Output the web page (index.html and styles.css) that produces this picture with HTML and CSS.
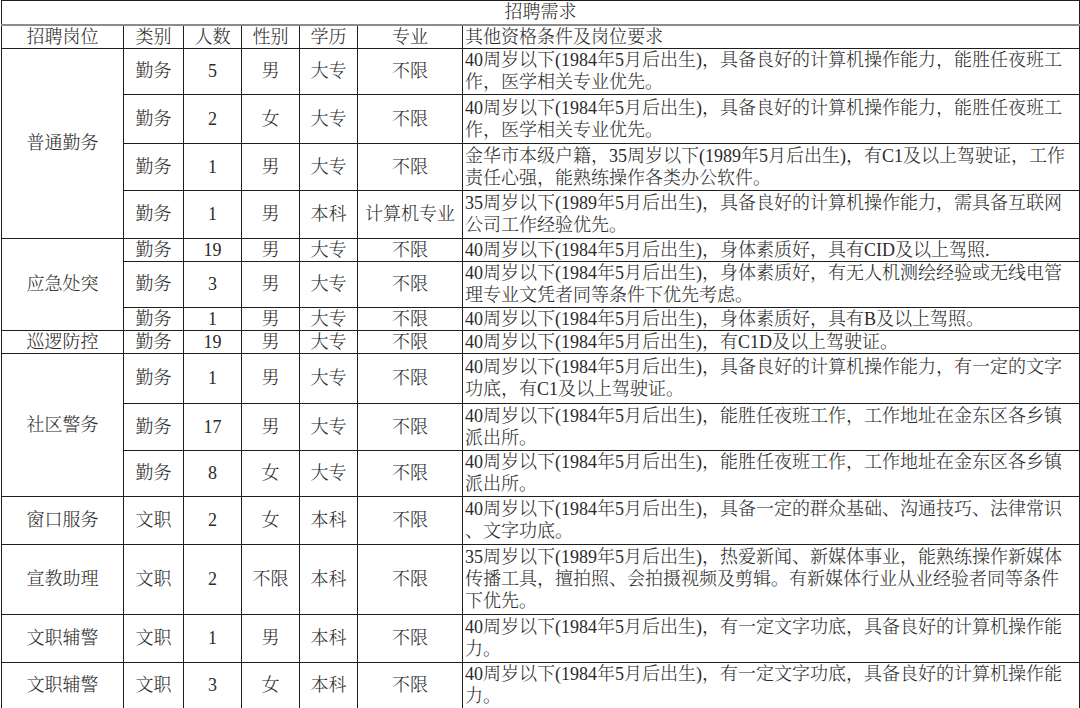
FILE: index.html
```html
<!DOCTYPE html>
<html lang="zh-CN">
<head>
<meta charset="utf-8">
<title>招聘需求</title>
<link rel="stylesheet" href="styles.css">
</head>
<body>
<table class="jobs">
  <colgroup>
    <col class="c-post"><col class="c-type"><col class="c-num"><col class="c-sex"><col class="c-edu"><col class="c-major"><col class="c-req">
  </colgroup>
  <tr class="h24 title-row"><td colspan="7" class="title">招聘需求</td></tr>
  <tr class="h23"><td>招聘岗位</td><td>类别</td><td>人数</td><td>性别</td><td>学历</td><td>专业</td><td class="req">其他资格条件及岗位要求</td></tr>

  <tr class="h46"><td rowspan="4">普通勤务</td><td>勤务</td><td>5</td><td>男</td><td>大专</td><td>不限</td><td class="req">40周岁以下(1984年5月后出生)，具备良好的计算机操作能力，能胜任夜班工<br>作，医学相关专业优先。</td></tr>
  <tr class="h49"><td>勤务</td><td>2</td><td>女</td><td>大专</td><td>不限</td><td class="req">40周岁以下(1984年5月后出生)，具备良好的计算机操作能力，能胜任夜班工<br>作，医学相关专业优先。</td></tr>
  <tr class="h47"><td>勤务</td><td>1</td><td>男</td><td>大专</td><td>不限</td><td class="req">金华市本级户籍，35周岁以下(1989年5月后出生)，有C1及以上驾驶证，工作<br>责任心强，能熟练操作各类办公软件。</td></tr>
  <tr class="h48"><td>勤务</td><td>1</td><td>男</td><td>本科</td><td>计算机专业</td><td class="req">35周岁以下(1989年5月后出生)，具备良好的计算机操作能力，需具备互联网<br>公司工作经验优先。</td></tr>

  <tr class="h23"><td rowspan="3">应急处突</td><td>勤务</td><td>19</td><td>男</td><td>大专</td><td>不限</td><td class="req">40周岁以下(1984年5月后出生)，身体素质好，具有CID及以上驾照.</td></tr>
  <tr class="h46"><td>勤务</td><td>3</td><td>男</td><td>大专</td><td>不限</td><td class="req">40周岁以下(1984年5月后出生)，身体素质好，有无人机测绘经验或无线电管<br>理专业文凭者同等条件下优先考虑。</td></tr>
  <tr class="h23"><td>勤务</td><td>1</td><td>男</td><td>大专</td><td>不限</td><td class="req">40周岁以下(1984年5月后出生)，身体素质好，具有B及以上驾照。</td></tr>

  <tr class="h23 soft-top"><td>巡逻防控</td><td>勤务</td><td>19</td><td>男</td><td>大专</td><td>不限</td><td class="req">40周岁以下(1984年5月后出生)，有C1D及以上驾驶证。</td></tr>

  <tr class="h50"><td rowspan="3">社区警务</td><td>勤务</td><td>1</td><td>男</td><td>大专</td><td>不限</td><td class="req">40周岁以下(1984年5月后出生)，具备良好的计算机操作能力，有一定的文字<br>功底，有C1及以上驾驶证。</td></tr>
  <tr class="h47"><td>勤务</td><td>17</td><td>男</td><td>大专</td><td>不限</td><td class="req">40周岁以下(1984年5月后出生)，能胜任夜班工作，工作地址在金东区各乡镇<br>派出所。</td></tr>
  <tr class="h46"><td>勤务</td><td>8</td><td>女</td><td>大专</td><td>不限</td><td class="req">40周岁以下(1984年5月后出生)，能胜任夜班工作，工作地址在金东区各乡镇<br>派出所。</td></tr>

  <tr class="h48"><td>窗口服务</td><td>文职</td><td>2</td><td>女</td><td>本科</td><td>不限</td><td class="req">40周岁以下(1984年5月后出生)，具备一定的群众基础、沟通技巧、法律常识<br>、文字功底。</td></tr>
  <tr class="h70"><td>宣教助理</td><td>文职</td><td>2</td><td>不限</td><td>本科</td><td>不限</td><td class="req">35周岁以下(1989年5月后出生)，热爱新闻、新媒体事业，能熟练操作新媒体<br>传播工具，擅拍照、会拍摄视频及剪辑。有新媒体行业从业经验者同等条件<br>下优先。</td></tr>
  <tr class="h48"><td>文职辅警</td><td>文职</td><td>1</td><td>男</td><td>本科</td><td>不限</td><td class="req">40周岁以下(1984年5月后出生)，有一定文字功底，具备良好的计算机操作能<br>力。</td></tr>
  <tr class="h46"><td>文职辅警</td><td>文职</td><td>3</td><td>女</td><td>本科</td><td>不限</td><td class="req">40周岁以下(1984年5月后出生)，有一定文字功底，具备良好的计算机操作能<br>力。</td></tr>
</table>
</body>
</html>
```

FILE: styles.css
```css
html, body {
  margin: 0;
  padding: 0;
  background: #ffffff;
}

.jobs {
  border-collapse: collapse;
  table-layout: fixed;
  width: 1078px;
  margin: 0 0 0 1px;
  font-family: "Liberation Serif", "Noto Serif CJK SC", "Noto Sans CJK SC", serif;
  font-size: 18px;
  font-weight: 300;
  line-height: 22px;
  color: #2b2b2b;
}

.c-post { width: 122px; }
.c-type { width: 60px; }
.c-num { width: 58px; }
.c-sex { width: 58px; }
.c-edu { width: 58px; }
.c-major { width: 105px; }
.c-req { width: 617px; }

.jobs td {
  box-sizing: border-box;
  border: 1px solid #1e1e1e;
  padding: 0 3px;
  text-align: center;
  vertical-align: middle;
  white-space: nowrap;
  overflow: hidden;
}

.jobs td.req {
  text-align: left;
  padding-left: 2px;
}

.jobs td.title {
  text-align: center;
  border-bottom: 2px solid #8c8c8c;
}

.soft-top td {
  border-top-color: #5a5a5a;
}

.h23 { height: 23px; }
.h24 { height: 24px; }
.h46 { height: 46px; }
.h47 { height: 47px; }
.h48 { height: 48px; }
.h49 { height: 49px; }
.h50 { height: 50px; }
.h70 { height: 70px; }
```
